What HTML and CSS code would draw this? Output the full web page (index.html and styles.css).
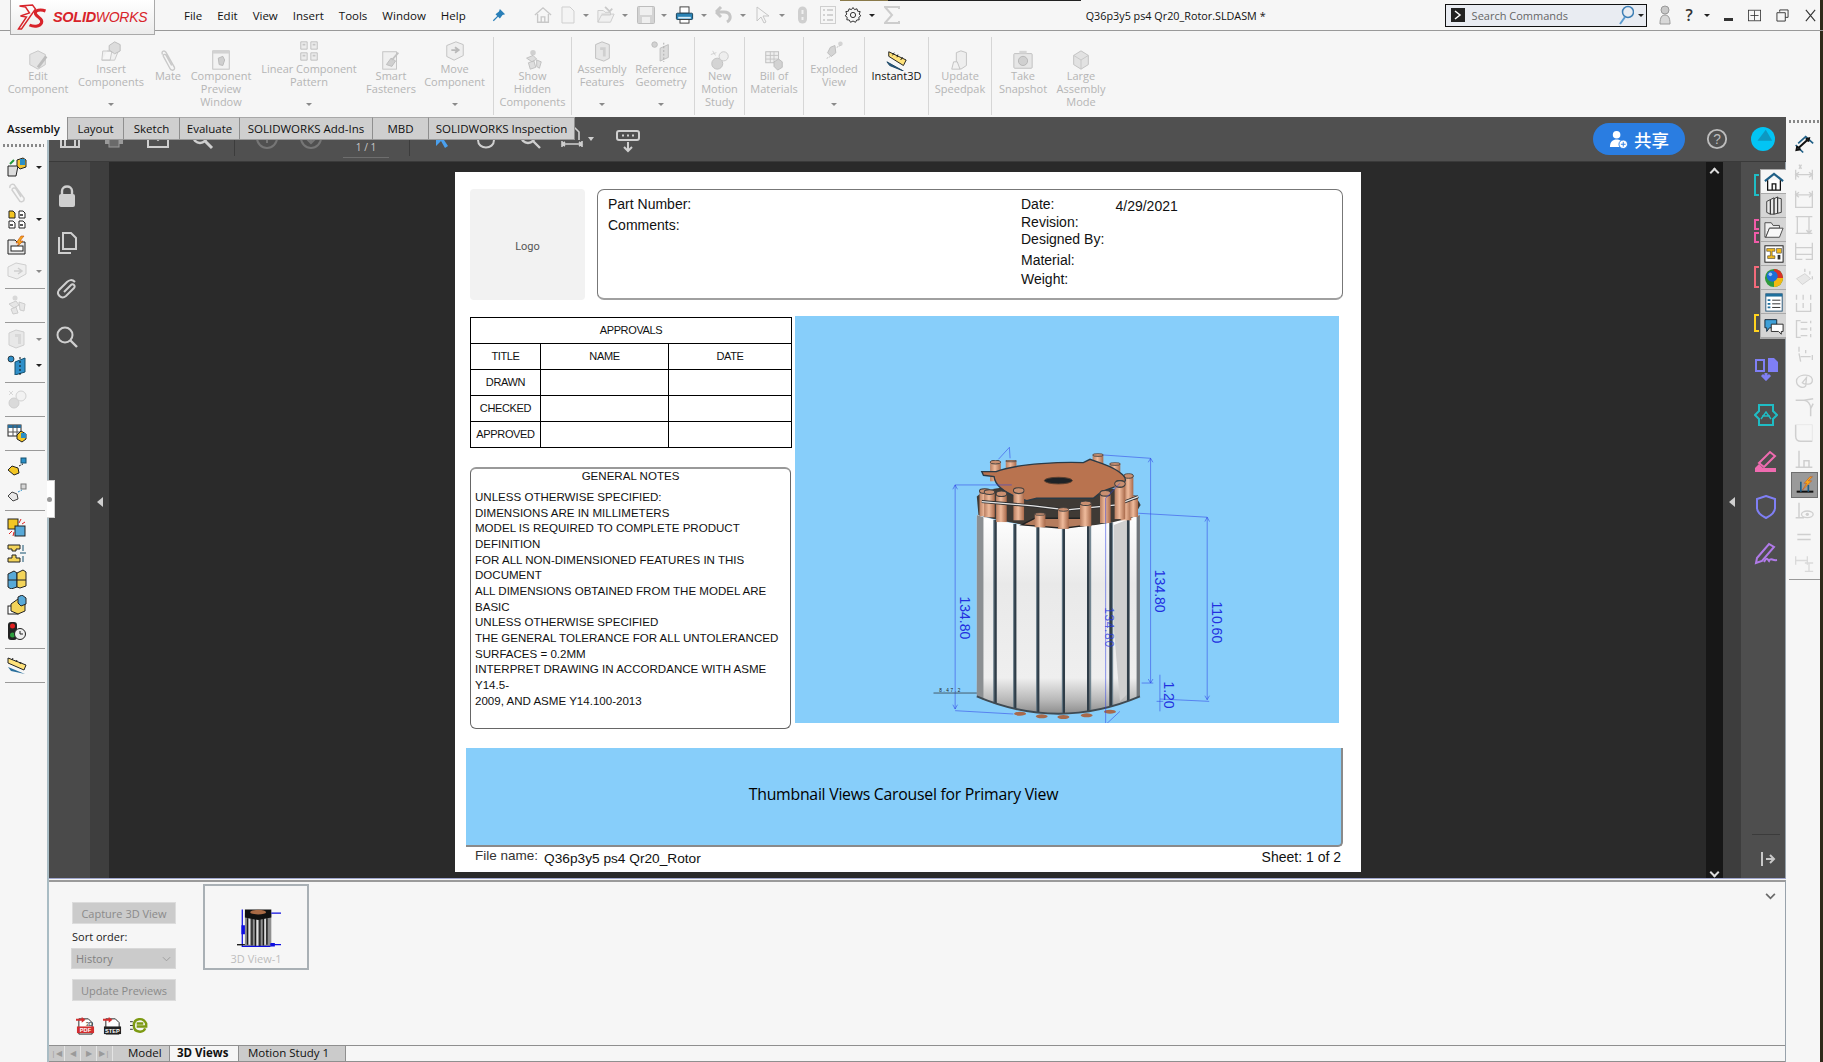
FILE: index.html
```html
<!doctype html>
<html lang="en">
  <head>
    <meta charset="UTF-8" />
    <title>Q36p3y5 ps4 Qr20_Rotor.SLDASM</title>
    <link rel="stylesheet" href="styles.css">
  </head>
  <body>
    <svg class="defs" width="0" height="0">
      <defs>
        <linearGradient id="gPanel" x1="0" y1="0" x2="0" y2="1">
          <stop offset="0" stop-color="#ffffff" />
          <stop offset="0.35" stop-color="#e9e9e9" />
          <stop offset="0.82" stop-color="#efefef" />
          <stop offset="0.93" stop-color="#b9b9b9" />
          <stop offset="1" stop-color="#8d8d8d" />
        </linearGradient>
        <linearGradient id="gStud" x1="0" y1="0" x2="1" y2="0">
          <stop offset="0" stop-color="#b87e60" />
          <stop offset="0.45" stop-color="#efbb9c" />
          <stop offset="1" stop-color="#a8694a" />
        </linearGradient>
        <symbol id="stud" viewBox="0 0 36 80" preserveAspectRatio="none">
          <rect x="2" y="8" width="32" height="72" fill="url(#gStud)" />
          <ellipse cx="18" cy="8" rx="16" ry="7" fill="#c98f70" stroke="#3f3f3f" stroke-width="3" />
        </symbol>
      </defs>
    </svg>

    <header class="titlebar">
      <div class="logo">
        <svg class="logo-mark" viewBox="0 0 30 28"><path d="M2 26 10 14 4 13 13 10 9 4 3 3 16 2 19 6 14 13 5 26Z" fill="none" stroke="#d8232a" stroke-width="1.4" /><path d="M29 8C24 6 18 7 19 11 21 15 27 15 25 20 23 24 17 24 13 22" fill="none" stroke="#d8232a" stroke-width="3" /></svg>
        <span class="logo-solid">SOLID</span><span class="logo-works">WORKS</span>
      </div>
      <nav class="menu">
        <span>File</span><span>Edit</span><span>View</span><span>Insert</span><span>Tools</span><span>Window</span><span>Help</span>
      </nav>
      <svg class="pin" viewBox="0 0 16 16"><path d="M9 1 15 7 12 8 9 12 7 10 2 15 1 14 6 9 4 7 8 4Z" fill="#2a7fb8" /></svg>
      <div class="quick">
        <svg class="q-home" viewBox="0 0 20 20"><path d="M1 10 10 2 19 10M4 9V18H16V9M8 18V12H12V18" fill="none" stroke="#c8c8c8" stroke-width="1.5" /></svg>
        <svg class="q-doc" viewBox="0 0 14 18"><path d="M1 1H9L13 5V17H1Z" fill="#f4f4f4" stroke="#cfcfcf" /></svg>
        <i class="caret"></i>
        <svg class="q-open" viewBox="0 0 20 20"><path d="M1 5H7L9 7H15V10H5L1 18ZM1 18H15L19 9H5" fill="#f0f0f0" stroke="#cacaca" /><path d="M9 1 14 6 17 3" fill="none" stroke="#cacaca" stroke-width="2" /></svg>
        <i class="caret"></i>
        <svg class="q-save" viewBox="0 0 18 18"><rect x="0.5" y="0.5" width="17" height="17" rx="1" fill="#d4d4d4" stroke="#bdbdbd" /><rect x="3" y="1" width="12" height="8" fill="#efefef" /><rect x="5" y="11" width="8" height="6" fill="#efefef" /></svg>
        <i class="caret"></i>
        <svg class="q-print" viewBox="0 0 20 20"><rect x="5" y="1" width="10" height="7" fill="#fff" stroke="#333" /><rect x="1" y="8" width="18" height="7" rx="1" fill="#2a83b5" stroke="#12394f" /><rect x="3" y="12" width="14" height="2" fill="#d9eefa" /><rect x="5" y="15" width="10" height="4" fill="#fff" stroke="#333" /></svg>
        <i class="caret"></i>
        <svg class="q-undo" viewBox="0 0 18 18"><path d="M1 6H9C16 6 17 13 12 16M1 6 6 1M1 6 6 11" fill="none" stroke="#c6c6c6" stroke-width="3" /></svg>
        <i class="caret"></i>
        <svg class="q-cursor" viewBox="0 0 14 18"><path d="M1 1V15L5 11 8 17 10 16 7 10H13Z" fill="#f6f6f6" stroke="#c6c6c6" /></svg>
        <i class="caret"></i>
        <svg class="q-mouse" viewBox="0 0 10 18"><rect x="0.5" y="0.5" width="9" height="17" rx="4.5" fill="#cfcfcf" /><path d="M5 4V8M5 11V14" stroke="#f0f0f0" stroke-width="2" /></svg>
        <svg class="q-list" viewBox="0 0 16 18"><rect x="0.5" y="0.5" width="15" height="17" fill="none" stroke="#cfcfcf" /><path d="M3 4H5M7 4H13M3 9H5M7 9H13M3 14H5M7 14H13" stroke="#c6c6c6" stroke-width="1.5" /></svg>
        <svg class="q-gear" viewBox="0 0 18 18"><circle cx="9" cy="9" r="2.6" fill="none" stroke="#333" /><path d="M9 1.5 10.5 3.6 13 2.8 13.6 5.2 16.2 5.6 15.2 8 16.8 9.8 14.8 11.3 15.2 13.8 12.7 14 11.5 16.3 9 15 6.5 16.3 5.3 14 2.8 13.8 3.2 11.3 1.2 9.8 2.8 8 1.8 5.6 4.4 5.2 5 2.8 7.5 3.6Z" fill="none" stroke="#333" /></svg>
        <i class="caret dark"></i>
        <svg class="q-sigma" viewBox="0 0 16 18"><path d="M15 3V1H1L8 9 1 17H15V15" fill="none" stroke="#cdcdcd" stroke-width="2" /></svg>
      </div>
      <div class="doc-title">Q36p3y5 ps4 Qr20_Rotor.SLDASM *</div>
      <div class="search">
        <svg class="search-cmd" viewBox="0 0 14 14"><rect width="14" height="14" fill="#222" /><path d="M4 3 9 7 4 11" fill="none" stroke="#fff" stroke-width="1.5" /></svg>
        <span>Search Commands</span>
        <svg class="search-glass" viewBox="0 0 16 20"><circle cx="10" cy="7" r="5.5" fill="none" stroke="#3f7fb5" stroke-width="1.5" /><path d="M7 12 2 19" stroke="#5b9bd0" stroke-width="2" /></svg>
        <i class="caret dark"></i>
      </div>
      <svg class="user" viewBox="0 0 14 20"><circle cx="7" cy="5" r="4" fill="#c9c9c9" stroke="#999" /><path d="M2 19C2 12 4 10 7 10S12 12 12 19Z" fill="#d8d8d8" stroke="#999" /></svg>
      <span class="qmark">?</span>
      <i class="caret dark"></i>
      <div class="winbtns">
        <span class="min"></span>
        <svg viewBox="0 0 16 16"><rect x="0.5" y="1.5" width="15" height="13" fill="none" stroke="#333" /><path d="M8 2V14M3 8H13" stroke="#333" /></svg>
        <svg viewBox="0 0 14 14"><path d="M4 3V1H13V9H10M1 4H10V13H1Z" fill="none" stroke="#333" /></svg>
        <svg viewBox="0 0 12 14"><path d="M1 1 11 13M11 1 1 13" stroke="#333" stroke-width="1.2" /></svg>
      </div>
      <div class="top-strip"></div>
    </header>

    <section class="ribbon">
      <div class="rb"><svg viewBox="0 0 24 24"><path d="M3 6 12 2 20 6V17L12 22 3 17Z" fill="#e4e4e4" stroke="#c6c6c6" /><path d="M12 20 21 8" stroke="#bdbdbd" stroke-width="3" /></svg><span>Edit<br>Component</span></div>
      <div class="rb arrow"><svg viewBox="0 0 24 24"><path d="M3 12H13L11 22H2ZM2 22H16L20 12H8" fill="#f0f0f0" stroke="#c6c6c6" /><path d="M10 6 16 2 22 5V12L16 15 10 11Z" fill="#dcdcdc" stroke="#bbb" /></svg><span>Insert<br>Components</span><i class="caret"></i></div>
      <div class="rb"><svg viewBox="0 0 24 24"><path d="M6 6 C4 2 9 1 10 4L19 20C20 24 15 24 14 21L7 8C6 6 9 5 10 7L16 18" fill="none" stroke="#c9c9c9" stroke-width="1.5" /></svg><span>Mate</span></div>
      <div class="rb"><svg viewBox="0 0 24 24"><rect x="3" y="2" width="18" height="20" fill="#f2f2f2" stroke="#bfbfbf" /><rect x="3" y="2" width="18" height="3" fill="#d2d2d2" /><path d="M9 10 14 8 16 12 14 18 10 17Z" fill="#cfcfcf" stroke="#b8b8b8" /></svg><span>Component<br>Preview<br>Window</span></div>
      <div class="rb arrow"><svg viewBox="0 0 24 24"><path d="M3 2H10V10H3ZM14 2H21V10H14ZM3 14H10V22H3ZM14 14H21V22H14Z" fill="#ececec" stroke="#bdbdbd" /><path d="M5 5H8M16 5H19M5 17H8M16 17H19" stroke="#c6c6c6" stroke-width="2" /></svg><span>Linear Component<br>Pattern</span><i class="caret"></i></div>
      <div class="rb"><svg viewBox="0 0 24 24"><rect x="3" y="3" width="15" height="19" fill="#f0f0f0" stroke="#c2c2c2" /><path d="M7 17 12 10 17 13 13 19Z" fill="#d0d0d0" stroke="#bbb" /><path d="M13 12 20 4" stroke="#c2c2c2" stroke-width="2" /></svg><span>Smart<br>Fasteners</span></div>
      <div class="rb arrow group-end"><svg viewBox="0 0 24 24"><path d="M3 6 13 2 21 5V17L11 22 3 18Z" fill="#eee" stroke="#bfbfbf" /><path d="M8 11H15M12 8 16 11 12 14" fill="none" stroke="#b9b9b9" stroke-width="2" /></svg><span>Move<br>Component</span><i class="caret"></i></div>
      <div class="rb group-end"><svg viewBox="0 0 24 24"><circle cx="12" cy="4" r="3" fill="#d0d0d0" /><path d="M5 10 12 7 16 11 11 14ZM7 15 13 13 15 20 9 22ZM16 12 21 14 19 21 16 19Z" fill="#dedede" stroke="#bebebe" /></svg><span>Show<br>Hidden<br>Components</span></div>
      <div class="rb arrow"><svg viewBox="0 0 24 24"><path d="M5 5 12 2 20 5V20L14 23 5 20Z" fill="#e6e6e6" stroke="#bdbdbd" /><path d="M10 8H16V18H13V11H10Z" fill="#cfcfcf" /></svg><span>Assembly<br>Features</span><i class="caret"></i></div>
      <div class="rb arrow group-end rb-ref"><svg viewBox="0 0 24 24"><circle cx="5" cy="5" r="3" fill="#d2d2d2" stroke="#bbb" /><path d="M11 9 20 5V19L11 23Z" fill="#dcdcdc" stroke="#bdbdbd" /><path d="M15 3V24" stroke="#aaa" stroke-dasharray="2 2" /></svg><span>Reference<br>Geometry</span><i class="caret"></i></div>
      <div class="rb group-end"><svg viewBox="0 0 24 24"><circle cx="9" cy="16" r="6" fill="#d4d4d4" stroke="#c0c0c0" /><circle cx="16" cy="8" r="5" fill="#eee" stroke="#c8c8c8" /><path d="M4 2 7 7M2 6 8 4" stroke="#cfcfcf" /></svg><span>New<br>Motion<br>Study</span></div>
      <div class="rb group-end"><svg viewBox="0 0 24 24"><rect x="3" y="3" width="14" height="12" fill="#eee" stroke="#bdbdbd" /><path d="M3 7H17M3 11H17M8 3V15M12 3V15" stroke="#c4c4c4" /><path d="M12 14 17 11 21 14 21 20 16 23 12 19Z" fill="#d2d2d2" stroke="#bbb" /></svg><span>Bill of<br>Materials</span></div>
      <div class="rb arrow group-end"><svg viewBox="0 0 24 24"><circle cx="19" cy="4" r="2.5" fill="#d4d4d4" /><path d="M8 8 13 6 14 14 9 18 5 14Z" fill="#d4d4d4" stroke="#bbb" /><path d="M15 8 19 6M4 20 8 18" stroke="#bbb" stroke-dasharray="2 1" /></svg><span>Exploded<br>View</span><i class="caret"></i></div>
      <div class="rb on group-end"><svg viewBox="0 0 24 24"><path d="M3 3 22 12 19 18 3 8Z" fill="#ffe27a" stroke="#111" /><path d="M7 7 9 4M12 9 13 6M16 12 18 9" stroke="#111" /><path d="M1 14 19 24 4 18Z" fill="#2a5f86" stroke="#17415f" /></svg><span>Instant3D</span></div>
      <div class="rb group-end"><svg viewBox="0 0 24 24"><path d="M8 4 13 2 19 4V18L13 22 8 19Z" fill="#eee" stroke="#c0c0c0" /><path d="M5 14 3 22H12L9 14Z" fill="#f2f2f2" stroke="#c0c0c0" /></svg><span>Update<br>Speedpak</span></div>
      <div class="rb"><svg viewBox="0 0 24 24"><rect x="2" y="5" width="20" height="16" rx="1" fill="#e6e6e6" stroke="#bdbdbd" /><circle cx="12" cy="13" r="5" fill="#d0d0d0" stroke="#b5b5b5" /><rect x="8" y="2" width="8" height="3" fill="#d5d5d5" /></svg><span>Take<br>Snapshot</span></div>
      <div class="rb"><svg viewBox="0 0 24 24"><path d="M4 7 12 2 20 7V17L12 22 4 17Z" fill="#e2e2e2" stroke="#c0c0c0" /><path d="M4 7 12 12 20 7M12 12V22" fill="none" stroke="#c6c6c6" /></svg><span>Large<br>Assembly<br>Mode</span></div>
    </section>

    <div class="tabs">
      <span class="tab current">Assembly</span>
      <span class="tab t-layout">Layout</span>
      <span class="tab t-sketch">Sketch</span>
      <span class="tab t-eval">Evaluate</span>
      <span class="tab t-addins">SOLIDWORKS Add-Ins</span>
      <span class="tab t-mbd">MBD</span>
      <span class="tab t-insp">SOLIDWORKS Inspection</span>
    </div>

    <div class="workspace">
      <aside class="leftbar">
        <div class="grip"></div>
        <div class="lb-row"><svg viewBox="0 0 20 20"><path d="M1 9H11L9 19H1Z" fill="#ddd" stroke="#222" /><path d="M3 7 7 3" stroke="#1f9a3c" stroke-width="2" /><path d="M10 3 16 1 19 3V10L13 12 10 9Z" fill="#f2c230" stroke="#222" /><rect x="13" y="2" width="5" height="6" fill="#2a8fc7" /></svg><i class="caret dark"></i></div>
        <div class="lb-row"><svg viewBox="0 0 20 20"><path d="M3 5C2 1 7 0 8 3L17 15C18 19 13 20 12 17L5 7C5 5 8 4 9 6L14 14" fill="none" stroke="#d0d0d0" stroke-width="1.5" /></svg></div>
        <div class="lb-row"><svg viewBox="0 0 20 20"><path d="M2 2H6L8 4V9H2Z" fill="#f3c623" stroke="#222" /><path d="M12 2H16L18 4V9H12ZM2 12H6L8 14V19H2ZM12 12H16L18 14V19H12Z" fill="#fff" stroke="#222" /><path d="M13 6H16M3 16H6M13 16H16" stroke="#222" stroke-width="1.5" /></svg><i class="caret dark"></i></div>
        <div class="lb-row"><svg viewBox="0 0 20 20"><path d="M1 5H8L10 7H18V19H1Z" fill="#e8e8e8" stroke="#222" /><path d="M14 1 9 8 12 8 9 13 16 6 13 6 17 1Z" fill="#f7a81b" stroke="#c24a12" stroke-width="0.6" /><rect x="4" y="11" width="12" height="5" fill="#fff" stroke="#222" /></svg></div>
        <div class="lb-row"><svg viewBox="0 0 20 20"><path d="M1 6 9 2 19 4V13L10 18 1 15Z" fill="#efefef" stroke="#cfcfcf" /><path d="M7 10H14M11 7 15 10 11 13" fill="none" stroke="#cfcfcf" stroke-width="1.5" /></svg><i class="caret"></i></div>
        <hr class="lb-sep">
        <div class="lb-row"><svg viewBox="0 0 20 20"><circle cx="8" cy="3" r="2.5" fill="#d8d8d8" /><path d="M2 9 9 6 12 10 7 13ZM4 14 9 12 11 18 6 19ZM12 7 18 9 17 16 13 15Z" fill="#e6e6e6" stroke="#cdcdcd" /></svg></div>
        <hr class="lb-sep">
        <div class="lb-row"><svg viewBox="0 0 20 20"><path d="M2 4 9 1 17 3V16L9 19 2 16Z" fill="#e8e8e8" stroke="#cfcfcf" /><path d="M8 5H14V15H11V8H8Z" fill="#d8d8d8" /></svg><i class="caret"></i></div>
        <div class="lb-row"><svg viewBox="0 0 20 20"><circle cx="4" cy="4" r="3" fill="#2f8fc9" stroke="#111" stroke-width="0.7" /><path d="M8 7 18 3V17L8 20Z" fill="#2f8fc9" stroke="#14506f" /><path d="M13 2V20" stroke="#111" stroke-dasharray="2 2" /></svg><i class="caret dark"></i></div>
        <hr class="lb-sep">
        <div class="lb-row"><svg viewBox="0 0 20 20"><circle cx="7" cy="14" r="5" fill="#dadada" stroke="#cfcfcf" /><circle cx="14" cy="7" r="5" fill="#f2f2f2" stroke="#d2d2d2" /><path d="M2 2 6 6M2 6 6 2" stroke="#d8d8d8" /></svg></div>
        <hr class="lb-sep">
        <div class="lb-row"><svg viewBox="0 0 20 20"><rect x="1" y="2" width="13" height="11" fill="#fff" stroke="#222" /><rect x="1" y="2" width="13" height="3" fill="#2a6f9c" /><path d="M1 9H14M6 2V13M10 2V13" stroke="#555" /><path d="M10 12 14 8 19 11V16L15 19 10 16Z" fill="#f3c623" stroke="#222" /><rect x="14" y="10" width="5" height="5" fill="#2a8fc7" /></svg></div>
        <hr class="lb-sep">
        <div class="lb-row"><svg viewBox="0 0 20 20"><path d="M1 13 5 9 11 11 12 16 7 18Z" fill="#f3c623" stroke="#222" /><rect x="14" y="1" width="5" height="5" fill="#2a8fc7" stroke="#14506f" /><path d="M12 9 16 7" stroke="#222" stroke-dasharray="2 1" /></svg></div>
        <div class="lb-row"><svg viewBox="0 0 20 20"><path d="M1 13 5 9 10 11 11 16 6 18Z" fill="#e8e8e8" stroke="#444" /><rect x="14" y="1" width="5" height="5" fill="#d6d6d6" stroke="#777" /><path d="M11 9 15 7" stroke="#2a8fc7" stroke-dasharray="2 1" /></svg></div>
        <hr class="lb-sep">
        <div class="lb-row"><svg viewBox="0 0 20 20"><rect x="1" y="2" width="10" height="10" fill="#f3c623" stroke="#222" /><rect x="8" y="9" width="10" height="10" fill="#58a9d8" stroke="#222" /><path d="M14 2 12 6M18 5 15 7M2 17 5 14M6 19 7 15" stroke="#e02020" /></svg></div>
        <div class="lb-row"><svg viewBox="0 0 20 20"><path d="M1 2H13V6H9V8H5V6H1ZM5 12H9V15H13V19H1V15H5Z" fill="#f3d45a" stroke="#222" /><path d="M13 10H19M16 2V8M16 13V19" stroke="#14506f" /></svg></div>
        <div class="lb-row"><svg viewBox="0 0 20 20"><path d="M1 5 7 2 10 4V18L4 20 1 18Z" fill="#58a9d8" stroke="#222" /><path d="M10 4 16 1 19 3V17L13 19 10 18Z" fill="#f3d45a" stroke="#222" /><path d="M1 11H19" stroke="#222" /></svg></div>
        <div class="lb-row"><svg viewBox="0 0 20 20"><rect x="1" y="11" width="10" height="8" fill="#fff" stroke="#222" /><path d="M4 9 11 4 18 7V16L11 19 4 16Z" fill="#f3d45a" stroke="#222" /><path d="M11 2 15 0 19 3V9L14 11 11 8Z" fill="#58a9d8" stroke="#222" /></svg></div>
        <div class="lb-row"><svg viewBox="0 0 20 20"><rect x="1" y="1" width="9" height="18" rx="3" fill="#222" /><circle cx="5.5" cy="5" r="2.5" fill="#e02020" /><circle cx="5.5" cy="14" r="2.5" fill="#2e9e3e" /><circle cx="13" cy="13" r="5.5" fill="#eee" stroke="#222" /><path d="M13 10V13H16" fill="none" stroke="#222" /></svg></div>
        <hr class="lb-sep">
        <div class="lb-row"><svg viewBox="0 0 20 20"><path d="M1 3 19 10 17 15 1 8Z" fill="#ffe27a" stroke="#222" /><path d="M5 5 6 3M9 7 10 5M13 9 14 7" stroke="#222" /><path d="M1 12 18 19 4 16Z" fill="#2a6f9c" /></svg></div>
        <hr class="lb-sep">
        <div class="flyout"><b></b></div>
      </aside>

      <main class="center">
        <section class="viewer">
          <div class="vtools">
            <svg viewBox="0 0 24 24"><path d="M3 3H21V21H3Z" fill="none" stroke="#cfcfcf" stroke-width="2" /><path d="M7 12H17V21H7Z" fill="none" stroke="#cfcfcf" stroke-width="2" /></svg>
            <svg viewBox="0 0 24 24"><path d="M6 2H18V8H6ZM3 8H21V18H3Z" fill="#9a9a9a" /><rect x="7" y="13" width="10" height="8" fill="#6a6a6a" stroke="#9a9a9a" /></svg>
            <svg viewBox="0 0 24 24"><path d="M2 5H22V21H2ZM2 5 12 14 22 5" fill="none" stroke="#cfcfcf" stroke-width="2" /></svg>
            <svg viewBox="0 0 24 24"><circle cx="10" cy="10" r="7" fill="none" stroke="#cfcfcf" stroke-width="2.4" /><path d="M15 15 22 22" stroke="#cfcfcf" stroke-width="3" /></svg>
            <i class="vsep"></i>
            <svg viewBox="0 0 24 24"><circle cx="12" cy="12" r="10" fill="none" stroke="#767676" stroke-width="2" /><path d="M12 17V7M8 11 12 7 16 11" fill="none" stroke="#767676" stroke-width="2" /></svg>
            <svg viewBox="0 0 24 24"><circle cx="12" cy="12" r="10" fill="none" stroke="#767676" stroke-width="2" /><path d="M12 7V17M8 13 12 17 16 13" fill="none" stroke="#767676" stroke-width="2" /></svg>
            <span class="pagenum">1 / 1</span>
            <i class="vsep"></i>
            <svg viewBox="0 0 24 24"><path d="M6 2V20L11 15 15 22 18 20 14 14H21Z" fill="#4aa0ee" /></svg>
            <svg viewBox="0 0 24 24"><path d="M4 4V14C4 24 20 24 20 14V4" fill="none" stroke="#cfcfcf" stroke-width="2" /></svg>
            <svg viewBox="0 0 24 24"><circle cx="10" cy="10" r="7" fill="none" stroke="#cfcfcf" stroke-width="2.4" /><path d="M15 15 22 22M6 10H14" stroke="#cfcfcf" stroke-width="2.4" /></svg>
            <svg class="v-fit" viewBox="0 0 24 24"><path d="M5 2H15L19 6V14M5 2V14M2 18H22M2 15V21M22 15V21M5 16 2 18 5 20M19 16 22 18 19 20" fill="none" stroke="#cfcfcf" stroke-width="1.6" /></svg>
            <i class="vcaret"></i>
            <svg class="v-kb" viewBox="0 0 24 24"><rect x="1" y="2" width="22" height="9" rx="2" fill="none" stroke="#cfcfcf" stroke-width="2" /><path d="M6 6.5H8M11 6.5H13M16 6.5H18" stroke="#cfcfcf" stroke-width="2" /><path d="M12 13V22M8 18 12 22 16 18" fill="none" stroke="#cfcfcf" stroke-width="2" /></svg>
          </div>
          <div class="vshare">
            <button class="share"><svg viewBox="0 0 20 20"><circle cx="8" cy="5" r="4" fill="#fff" /><path d="M1 18C1 12 4 10 8 10S15 12 15 18Z" fill="#fff" /><circle cx="15" cy="15" r="4.5" fill="#fff" stroke="#2a7de1" /><path d="M15 12.5V17.5M12.5 15H17.5" stroke="#2a7de1" /></svg>共享</button>
            <svg class="vhelp" viewBox="0 0 24 24"><circle cx="12" cy="12" r="10" fill="none" stroke="#bdbdbd" stroke-width="2" /><text x="12" y="17" class="vhelp-q">?</text></svg>
            <svg class="vavatar" viewBox="0 0 26 26"><circle cx="13" cy="13" r="13" fill="#02c4f4" /><path d="M16 3 23 15H7Z" fill="#0d98c2" /></svg>
          </div>

          <div class="vbody">
            <div class="vpanel">
              <svg viewBox="0 0 24 24"><rect x="4" y="10" width="16" height="13" rx="2" fill="#cfcfcf" /><path d="M7 10V7C7 1 17 1 17 7V10" fill="none" stroke="#cfcfcf" stroke-width="2.4" /></svg>
              <svg viewBox="0 0 24 24"><path d="M8 2H16L21 7V18H8ZM4 6V22H16" fill="none" stroke="#cfcfcf" stroke-width="2" /></svg>
              <svg viewBox="0 0 24 24"><path d="M20 4C17 1 14 2 12 4L4 12C1 16 6 22 11 18L19 10C21 8 18 5 16 7L9 14" fill="none" stroke="#cfcfcf" stroke-width="2" /></svg>
              <svg viewBox="0 0 24 24"><circle cx="10" cy="10" r="7.5" fill="none" stroke="#cfcfcf" stroke-width="2" /><path d="M15.5 15.5 22 22" stroke="#cfcfcf" stroke-width="2.4" /></svg>
            </div>
            <div class="vstrip"><i class="tri-left"></i></div>

            <div class="canvas">
              <article class="page">
                <div class="page-head">
                  <div class="logo-box">Logo</div>
                  <div class="info-box">
                    <div class="info-left">
                      <div class="il-part">Part Number:</div>
                      <div class="il-comm">Comments:</div>
                    </div>
                    <div class="info-right">
                      <div class="ir-date"><span>Date:</span><span class="date-val">4/29/2021</span></div>
                      <div class="ir-rev">Revision:</div>
                      <div class="ir-des">Designed By:</div>
                      <div class="ir-mat">Material:</div>
                      <div class="ir-wei">Weight:</div>
                    </div>
                  </div>
                </div>

                <div class="page-main">
                  <div class="page-left">
                    <table class="approvals">
                      <colgroup><col class="c1"><col class="c2"><col></colgroup>
                      <tr><td colspan="3">APPROVALS</td></tr>
                      <tr><td>TITLE</td><td>NAME</td><td>DATE</td></tr>
                      <tr><td>DRAWN</td><td></td><td></td></tr>
                      <tr><td>CHECKED</td><td></td><td></td></tr>
                      <tr><td>APPROVED</td><td></td><td></td></tr>
                    </table>
                    <div class="notes">
                      <div class="notes-title">GENERAL NOTES</div>
                      <p>UNLESS OTHERWISE SPECIFIED:<br>DIMENSIONS ARE IN MILLIMETERS<br>MODEL IS REQUIRED TO COMPLETE PRODUCT<br>DEFINITION<br>FOR ALL NON-DIMENSIONED FEATURES IN THIS<br>DOCUMENT<br>ALL DIMENSIONS OBTAINED FROM THE MODEL ARE<br>BASIC<br>UNLESS OTHERWISE SPECIFIED<br>THE GENERAL TOLERANCE FOR ALL UNTOLERANCED<br>SURFACES = 0.2MM<br>INTERPRET DRAWING IN ACCORDANCE WITH ASME<br>Y14.5-<br>2009, AND ASME Y14.100-2013</p>
                    </div>
                  </div>
                  <div class="primary-view">
                    <svg class="rotor" viewBox="0 0 990 880">
                      <path d="M170 255V800Q415 904 660 800V255Q415 329 170 255Z" fill="url(#gPanel)" />
                      <path d="M582 285 625 268V790L600 815 582 600Z" fill="#cfcfcf" />
                      <path d="M170 255V800L190 812V262Z" fill="#8b8f92" />
                      <path d="M650 258V803L660 800V255Z" fill="#70767b" />
                      <g fill="none" stroke="#2f3d48" stroke-width="8">
                        <path d="M226 270V821M285 282V837M354 290V849M431 292V852M505 287V845M572 277V831M625 265V814" />
                      </g>
                      <g fill="none" stroke="#5d7382" stroke-width="3">
                        <path d="M221 270V821M281 282V837M350 290V849M427 292V852M512 287V845M578 277V831" />
                      </g>
                      <path d="M170 800Q415 904 660 800" fill="none" stroke="#3f4a52" stroke-width="6" />
                      <g fill="#a8694a">
                        <ellipse cx="300" cy="852" rx="18" ry="6" /><ellipse cx="365" cy="860" rx="18" ry="6" /><ellipse cx="430" cy="862" rx="18" ry="6" /><ellipse cx="500" cy="857" rx="18" ry="6" /><ellipse cx="570" cy="846" rx="18" ry="6" />
                      </g>
                      <path d="M170 200Q200 165 415 160Q640 165 662 225L640 262Q415 325 175 255Z" fill="#3f3a35" />
                      <use href="#stud" x="600" y="190" width="36" height="82" />
                      <use href="#stud" x="626" y="196" width="30" height="66" />
                      <use href="#stud" x="610" y="130" width="32" height="80" />
                      <use href="#stud" x="208" y="90" width="36" height="65" />
                      <use href="#stud" x="255" y="90" width="36" height="30" />
                      <use href="#stud" x="516" y="70" width="36" height="50" />
                      <use href="#stud" x="567" y="97" width="36" height="50" />
                      <path d="M185 125H228C290 100 440 95 490 98L510 88 545 100C600 120 640 150 600 165L545 185 520 205H350L320 212C265 195 225 170 222 140L190 136Z" fill="#b9734f" stroke="#2a3a46" stroke-width="4" />
                      <ellipse cx="415" cy="152" rx="42" ry="10" fill="#1e2226" stroke="#5a4030" stroke-width="3" />
                      <path d="M305 285 345 265 480 265 510 285 430 295Z" fill="#b57c5d" stroke="#222" stroke-width="4" />
                      <use href="#stud" x="176" y="175" width="36" height="85" />
                      <use href="#stud" x="190" y="178" width="36" height="85" />
                      <use href="#stud" x="226" y="182" width="36" height="95" />
                      <use href="#stud" x="278" y="172" width="36" height="100" />
                      <path d="M185 215 340 228 440 240 590 225 655 200" fill="none" stroke="#2f2f2f" stroke-width="9" />
                      <path d="M185 215 340 228 440 240 590 225 655 200" fill="none" stroke="#e6e6e6" stroke-width="4" />
                      <use href="#stud" x="342" y="248" width="36" height="45" />
                      <use href="#stud" x="412" y="232" width="36" height="65" />
                      <use href="#stud" x="478" y="212" width="38" height="78" />
                      <use href="#stud" x="538" y="180" width="36" height="100" />
                      <use href="#stud" x="582" y="150" width="36" height="118" />
                      <g fill="none" stroke="#2c3fe6" stroke-width="1.6">
                        <path d="M105 165H275M105 165V838M98 178 105 165 112 178M98 825 105 838 112 825" />
                        <path d="M105 843 280 853" />
                        <path d="M550 75 692 85V760M685 97 692 85 699 97M685 748 692 760 699 748M665 760H700" />
                        <path d="M655 250 862 262V810M855 275 862 262 869 275M855 798 862 810 869 798M720 808 868 815" />
                        <path d="M720 735V845M710 815H730" />
                        <path d="M557 885V205L600 160M557 885 600 845" />
                        <path d="M235 88 268 52 270 85" />
                      </g>
                      <g class="dim-text">
                        <text transform="translate(120 500) rotate(90)">134.80</text>
                        <text transform="translate(705 420) rotate(90)">134.80</text>
                        <text transform="translate(875 515) rotate(90)">110.60</text>
                        <text transform="translate(733 755) rotate(90)">1.20</text>
                        <text class="dim-thin" transform="translate(555 532) rotate(90)">134.80</text>
                      </g>
                      <path d="M40 790H170" stroke="#222" stroke-width="2" />
                      <text class="dim-dark" x="57" y="788">8.47.2</text>
                    </svg>
                  </div>
                </div>

                <div class="carousel">Thumbnail Views Carousel for Primary View</div>

                <div class="page-foot">
                  <span class="fn-label">File name:</span>
                  <span class="fn-value">Q36p3y5 ps4 Qr20_Rotor</span>
                  <span class="sheet">Sheet: 1 of 2</span>
                </div>
              </article>
            </div>

            <div class="vscroll"><i class="chev up"></i><i class="chev"></i></div>
            <div class="vstrip2"><i class="tri-left"></i></div>
            <div class="vright">
              <svg class="teal" viewBox="0 0 24 24"><path d="M5 2H1V22H5" fill="none" stroke="#1fbcc4" stroke-width="2" /></svg>
              <svg viewBox="0 0 24 24"><path d="M5 1H1V10H5M5 14H1V23H5" fill="none" stroke="#f05ba8" stroke-width="2" /></svg>
              <svg viewBox="0 0 24 24"><path d="M5 2H1V22H5" fill="none" stroke="#f26a7a" stroke-width="2" /></svg>
              <svg viewBox="0 0 24 24"><path d="M5 4H1V20H5" fill="none" stroke="#ffd21f" stroke-width="2" /></svg>
              <svg viewBox="0 0 24 24"><path d="M1 2H11V15H1ZM14 1H20L24 5V15H14Z" fill="#7f7ff5" /><path d="M3 4H9V13H3Z" fill="#4a4a4a" /><path d="M12 16V21M8 18 12 22 16 18" stroke="#7f7ff5" stroke-width="3" fill="none" /></svg>
              <svg viewBox="0 0 24 24"><path d="M5 2H19V8L23 12 19 16V22H5V16L1 12 5 8Z" fill="none" stroke="#1fbcc4" stroke-width="2" /><path d="M7 16 12 9 17 16M8 13H16" fill="none" stroke="#1fbcc4" stroke-width="1.4" /></svg>
              <svg viewBox="0 0 24 24"><path d="M5 14 16 3 21 7 10 18Z" fill="none" stroke="#ef6bb0" stroke-width="2" /><path d="M1 19 5 15 9 19H22V23H1Z" fill="#ef6bb0" /></svg>
              <svg viewBox="0 0 24 24"><path d="M12 1 21 4V13C21 18 16 21 12 23 8 21 3 18 3 13V4Z" fill="none" stroke="#7f7ff5" stroke-width="2" /></svg>
              <svg viewBox="0 0 24 24"><path d="M3 17 15 3 20 6 8 20 2 22Z" fill="none" stroke="#b07ae8" stroke-width="2" /><path d="M10 21C13 15 14 19 15 20 17 16 18 20 23 19" fill="none" stroke="#b07ae8" stroke-width="2" /></svg>
              <hr class="vright-line">
              <svg class="collapse" viewBox="0 0 16 16"><path d="M2 1V15" stroke="#c8c8c8" stroke-width="2" /><path d="M6 8H14M10 4 14 8 10 12" fill="none" stroke="#c8c8c8" stroke-width="2" /></svg>
            </div>
          </div>
        </section>

        <section class="pane">
          <div class="pane-body">
            <div class="pane-controls">
              <div class="pbtn">Capture 3D View</div>
              <label class="sort-label">Sort order:</label>
              <div class="pselect"><span>History</span><svg viewBox="0 0 10 6"><path d="M1 1 5 5 9 1" fill="none" stroke="#9a9a9a" /></svg></div>
              <div class="pbtn update">Update Previews</div>
              <div class="pane-icons">
                <svg viewBox="0 0 20 20"><path d="M3 3H13L17 7V19H3Z" fill="#fff" stroke="#222" /><path d="M0 3H6V1L10 4 6 7V5H0Z" fill="#d32f2f" /><rect x="1" y="11" width="18" height="7" fill="#d32f2f" /><text x="10" y="17" class="pi-pdf">PDF</text><text x="14" y="10" class="pi-3d">3D</text></svg>
                <svg viewBox="0 0 20 20"><path d="M3 3H13L17 7V19H3Z" fill="#fff" stroke="#222" /><path d="M0 3H6V1L10 4 6 7V5H0Z" fill="#d32f2f" /><rect x="1" y="11" width="18" height="8" fill="#222" /><text x="10" y="17.4" class="pi-step">STEP</text></svg>
                <svg viewBox="0 0 20 20"><path d="M16 13C14 18 4 18 4 10S14 1 17 8V11H7M7 8H14" fill="none" stroke="#7d9a12" stroke-width="2.6" /><path d="M0 6H3M0 10H3M0 14H3" stroke="#333" /></svg>
              </div>
            </div>
            <figure class="thumb">
              <svg viewBox="0 0 50 50">
                <rect x="9" y="8" width="30" height="38" fill="#8f8f8f" />
                <path d="M12 14V44M17 14V45M21 14V46M26 14V46M30 14V45M34 14V44" stroke="#1c1c1c" stroke-width="1.6" />
                <path d="M14 14V44M23 14V46M32 14V44" stroke="#e6e6e6" stroke-width="1.6" />
                <path d="M9 4H39V13L24 16 9 13Z" fill="#111" /><ellipse cx="24" cy="7" rx="9" ry="2.6" fill="#a96a45" />
                <path d="M6 4V46H38M39 8H52V44H38" fill="none" stroke="#0d0de0" stroke-width="1.4" />
                <path d="M5 22H9V32H5ZM50 24H54V34H50ZM38 42H43V46H38Z" fill="#0d0de0" />
                <path d="M0 44H9" stroke="#111" stroke-width="1.5" />
              </svg>
              <figcaption>3D View-1</figcaption>
            </figure>
            <svg class="pane-chev" viewBox="0 0 12 8"><path d="M1 1 6 6 11 1" fill="none" stroke="#6a6a6a" stroke-width="2" /></svg>
          </div>
          <div class="sheet-tabs">
            <div class="tnav"><i>|◀</i><i>◀</i><i>▶</i><i>▶|</i></div>
            <span class="stab">Model</span>
            <span class="stab active">3D Views</span>
            <span class="stab last">Motion Study 1</span>
          </div>
        </section>
      </main>

      <aside class="rightbar">
        <div class="grip"></div>
        <svg class="rb-first" viewBox="0 0 24 24"><path d="M5 10 14 2 23 10" fill="none" stroke="#1f5f86" stroke-width="2" /><path d="M2 12 11 21" stroke="#1f5f86" stroke-width="2" /><path d="M5 16 16 6M14 5 18 4 17 8M4 13 3 18 8 17" fill="none" stroke="#111" stroke-width="2.4" /></svg>
        <svg viewBox="0 0 24 24"><path d="M2 8V20M22 8V20M2 14H22M6 11 2 14 6 17M18 11 22 14 18 17M6 2 9 7M9 2 6 7" fill="none" stroke="#cfcfcf" stroke-width="1.6" /></svg>
        <svg viewBox="0 0 24 24"><path d="M2 2V22H22V2M2 7H22M6 4 2 7 6 10M18 4 22 7 18 10" fill="none" stroke="#cfcfcf" stroke-width="1.6" /></svg>
        <svg viewBox="0 0 24 24"><path d="M2 2H22M2 22H22M4 2V22M18 2V22M15 18 18 22 21 18" fill="none" stroke="#cfcfcf" stroke-width="1.6" /></svg>
        <svg viewBox="0 0 24 24"><path d="M2 2V22H10M22 2V22H14M2 8H22M2 16H22" fill="none" stroke="#cfcfcf" stroke-width="1.6" /></svg>
        <svg viewBox="0 0 24 24"><path d="M3 14 13 8 20 14 10 21Z" fill="#e8e8e8" stroke="#cfcfcf" /><path d="M13 6V2M19 9V5M22 15V11" stroke="#cfcfcf" stroke-width="1.6" /></svg>
        <svg viewBox="0 0 24 24"><path d="M3 2V8M11 2V8M20 2V8M3 12V22H20V12M11 12V18" fill="none" stroke="#cfcfcf" stroke-width="1.6" /></svg>
        <svg viewBox="0 0 24 24"><path d="M8 2H3V22H8M20 2V5M20 10V14M20 18V22M8 4H16M8 12H16M8 20H16" fill="none" stroke="#cfcfcf" stroke-width="1.6" /></svg>
        <svg viewBox="0 0 24 24"><path d="M6 2V8M14 6V10M22 12V18M6 10 8 20M8 14 20 14" fill="none" stroke="#cfcfcf" stroke-width="1.6" /></svg>
        <svg viewBox="0 0 24 24"><path d="M3 12C3 4 20 2 22 10 23 18 12 16 10 14L15 8 14 18C10 22 3 18 3 12Z" fill="none" stroke="#cfcfcf" stroke-width="1.6" /></svg>
        <svg viewBox="0 0 24 24"><path d="M2 4H12C16 4 20 8 20 14V23M12 4 23 2M20 14 23 8" fill="none" stroke="#cfcfcf" stroke-width="1.8" /></svg>
        <svg viewBox="0 0 24 24"><path d="M2 2V16C2 20 5 22 8 22H22" fill="none" stroke="#cfcfcf" stroke-width="1.8" /><path d="M2 2H22V22" fill="none" stroke="#e6e6e6" /></svg>
        <svg viewBox="0 0 24 24"><path d="M6 2V22M2 22H22M12 22V14H18V22" fill="none" stroke="#cfcfcf" stroke-width="1.8" /></svg>
        <div class="rb-active"><svg viewBox="0 0 24 24"><path d="M2 20H22" stroke="#111" stroke-width="2.4" /><path d="M7 8V20M16 12V20" stroke="#1f5f86" stroke-width="2" /><path d="M18 2 11 10 14 10 9 18 20 7 16 7 21 2Z" fill="#f7a81b" stroke="#c24a12" stroke-width="0.6" /></svg></div>
        <svg viewBox="0 0 24 24"><path d="M6 2V20M2 20H12" fill="none" stroke="#cfcfcf" stroke-width="1.8" /><ellipse cx="16" cy="16" rx="7" ry="4" fill="none" stroke="#cfcfcf" stroke-width="1.6" /><circle cx="16" cy="16" r="2" fill="#cfcfcf" /></svg>
        <svg viewBox="0 0 24 24"><path d="M4 9H20M4 15H20" stroke="#cfcfcf" stroke-width="2" /></svg>
        <svg viewBox="0 0 24 24"><path d="M2 4V14M16 4V14M2 9H16M13 12H23M13 22H23M18 12V22" fill="none" stroke="#dadada" stroke-width="1.6" /></svg>
        <hr class="rb-sep">
        <div class="task-tabs">
          <span class="tt first"><svg viewBox="0 0 22 22"><path d="M1 10 11 2 21 10" fill="none" stroke="#1f5f86" stroke-width="2.4" /><path d="M4 9V20H18V9M9 20V13H13V20" fill="#fff" stroke="#111" stroke-width="1.4" /></svg></span>
          <span class="tt"><svg viewBox="0 0 22 22"><path d="M3 6 7 4V20L3 18ZM7 4 11 2V20L7 20ZM11 3 15 1V19L11 20ZM15 2 19 3V18L15 19Z" fill="#e8e8e8" stroke="#333" /></svg></span>
          <span class="tt"><svg viewBox="0 0 22 22"><path d="M1 3H8L10 6H17V9H6L2 19H1Z" fill="#f0f0f0" stroke="#444" /><path d="M6 9H21L17 19H2Z" fill="#f8f8f8" stroke="#444" /></svg></span>
          <span class="tt"><svg viewBox="0 0 22 22"><rect x="1" y="2" width="20" height="18" fill="#fff" stroke="#111" /><path d="M3 5H12V8H9V13H12V16H4V13H7V8H3Z" fill="#f0b81c" stroke="#333" stroke-width="0.6" /><rect x="14" y="5" width="5" height="5" fill="#f0b81c" stroke="#333" stroke-width="0.6" /><rect x="15" y="12" width="3" height="5" fill="#333" /></svg></span>
          <span class="tt"><svg viewBox="0 0 22 22"><circle cx="11" cy="11" r="10" fill="#2f9a3c" /><path d="M11 11V1A10 10 0 0 1 21 11Z" fill="#d93025" /><path d="M11 11H21A10 10 0 0 1 11 21Z" fill="#f2b90f" /><circle cx="9" cy="9" r="6" fill="#1d6fd6" /><circle cx="7" cy="7" r="2" fill="#9fc8f5" /></svg></span>
          <span class="tt"><svg viewBox="0 0 22 22"><rect x="2" y="2" width="18" height="19" fill="#fff" stroke="#1f4f72" /><rect x="2" y="2" width="18" height="3" fill="#1f6f9c" /><path d="M4 8H7V10H4ZM4 12H7V14H4ZM4 16H7V18H4Z" fill="#1f6f9c" /><path d="M9 9H18M9 13H18M9 17H18" stroke="#222" /></svg></span>
          <span class="tt"><svg viewBox="0 0 22 22"><path d="M1 4H14V13H6L3 17V13H1Z" fill="#3fa0d8" stroke="#123" /><path d="M8 9H21V17H19V20L16 17H8Z" fill="#fff" stroke="#222" /></svg></span>
        </div>
      </aside>
      <div class="edge"></div>
    </div>
  </body>
</html>
```

FILE: styles.css
```css
* {
  box-sizing: border-box;
}
html,
body {
  margin: 0;
  padding: 0;
}
body {
  position: relative;
  width: 1823px;
  height: 1062px;
  overflow: hidden;
  display: flex;
  flex-direction: column;
  background-color: #f6f6f6;
  font-family: "Open Sans", sans-serif;
  font-size: 11px;
  color: #111;
}
svg {
  display: block;
  flex: none;
}
.defs {
  position: absolute;
}

/* carets used all over */
.caret {
  display: block;
  flex: none;
  width: 0;
  height: 0;
  border-left: 3px solid transparent;
  border-right: 3px solid transparent;
  border-top: 3px solid #8a8a8a;
}
.caret.dark {
  border-top-color: #222;
}

/* title bar */
.titlebar {
  position: relative;
  height: 31px;
  flex: none;
  display: flex;
  align-items: center;
  border-bottom: 1px solid #999;
}
.top-strip {
  position: absolute;
  left: 840px;
  top: 0;
  width: 241px;
  height: 1px;
  background: linear-gradient(90deg, #8a7a4a 20%, #222 20%);
}
.logo {
  position: relative;
  z-index: 3;
  align-self: flex-start;
  flex: none;
  width: 145px;
  height: 35px;
  margin-left: 10px;
  padding-left: 5px;
  display: flex;
  align-items: center;
  background: linear-gradient(180deg, #fff, #ececec);
  border: 1px solid #aaa;
  border-top: 0;
  color: #d8232a;
  font-family: "Liberation Sans", sans-serif;
  font-size: 14.5px;
  font-style: italic;
}
.logo-mark {
  width: 31px;
  height: 28px;
  margin-right: 6px;
}
.logo-solid {
  font-weight: bold;
  letter-spacing: -0.3px;
}
.logo-works {
  font-size: 14px;
  letter-spacing: -0.3px;
}
.menu {
  display: flex;
  gap: 15px;
  margin-left: 29px;
  font-size: 11.5px;
}
.pin {
  width: 14px;
  height: 14px;
  margin-left: 26px;
}
.quick {
  display: flex;
  align-items: center;
  margin-left: 27px;
}
.quick svg {
  height: 18px;
}
.q-home { width: 20px; }
.q-doc { width: 14px; margin: 0 8px; }
.q-open { width: 20px; margin: 0 6px 0 7px; }
.q-save { width: 18px; margin: 0 6px 0 9px; }
.q-print { width: 19px; margin: 0 7px 0 8px; }
.q-undo { width: 18px; margin: 0 7px 0 8px; }
.q-cursor { width: 14px; margin: 0 9px 0 10px; }
.q-mouse { width: 11px; margin: 0 12px 0 12px; }
.q-list { width: 16px; margin-right: 8px; }
.q-gear { width: 18px; margin-right: 7px; }
.q-sigma { width: 16px; margin-left: 9px; }
.doc-title {
  margin-left: 186px;
  font-size: 10.8px;
  white-space: nowrap;
}
.search {
  display: flex;
  align-items: center;
  width: 202px;
  height: 23px;
  margin-left: 179px;
  padding: 0 2px 0 5px;
  background-color: #e9ecf2;
  border: 1px solid #111;
  color: #666;
}
.search-cmd {
  width: 14px;
  height: 14px;
  margin-right: 7px;
}
.search-glass {
  width: 16px;
  height: 20px;
  margin-left: auto;
  margin-right: 4px;
}
.user {
  width: 14px;
  height: 20px;
  margin-left: 11px;
}
.qmark {
  margin: 0 11px 0 14px;
  font-size: 16px;
  font-weight: 600;
  color: #333;
}
.winbtns {
  display: flex;
  align-items: center;
  gap: 15px;
  margin-left: 14px;
}
.winbtns svg {
  width: 13px;
  height: 13px;
}
.min {
  width: 9px;
  height: 3px;
  margin-top: 9px;
  background-color: #333;
}

/* ribbon */
.ribbon {
  height: 86px;
  flex: none;
  display: grid;
  grid-template-columns: 76px 70px 44px 62px 114px 50px 78px 78px 60px 63px 50px 59px 61px 64px 63px 62px 54px;
  padding-top: 6px;
  padding-bottom: 2px;
  background-color: #f6f6f6;
}
.rb {
  display: flex;
  flex-direction: column;
  align-items: center;
  padding-top: 12px;
  text-align: center;
  line-height: 13px;
  color: #b5b5b5;
  white-space: nowrap;
}
.rb svg {
  width: 22px;
  height: 22px;
  margin-bottom: -2px;
}
.rb.arrow {
  padding-top: 3px;
}
.rb.arrow svg {
  margin-bottom: 0;
}
.rb-ref {
  padding-right: 4px;
}
.rb .caret {
  margin-top: auto;
  margin-bottom: 9px;
}
.group-end {
  border-right: 1px solid #d6d6d6;
}
.rb.on {
  color: #111;
}

/* tabs over the viewer toolbar */
.tabs {
  position: absolute;
  left: 0;
  top: 117px;
  z-index: 4;
  display: flex;
  height: 23px;
  font-size: 11.5px;
}
.tab {
  display: flex;
  align-items: center;
  justify-content: center;
  background-color: #cfcfcf;
  border-right: 1px solid #8f8f8f;
  border-bottom: 1px solid #9a9a9a;
  border-top: 1px solid #a8a8a8;
}
.tab.current {
  width: 68px;
  background-color: #f6f6f6;
  border-top: 0;
  border-bottom: 0;
  border-right: 1px solid #8f8f8f;
  font-weight: 600;
}
.t-layout { width: 56px; }
.t-sketch { width: 56px; }
.t-eval { width: 60px; }
.t-addins { width: 133px; }
.t-mbd { width: 56px; }
.t-insp { width: 146px; }

/* main area */
.workspace {
  flex: 1;
  min-height: 0;
  display: flex;
}
.leftbar {
  position: relative;
  width: 49px;
  flex: none;
  padding-top: 27px;
  border-right: 2px solid #a9bcc4;
}
.grip {
  height: 3px;
  margin: 0 3px 7px;
  background: repeating-linear-gradient(90deg, #888 0 2px, transparent 2px 4px);
}
.lb-row {
  display: flex;
  align-items: center;
  gap: 9px;
  height: 26px;
  padding-left: 7px;
}
.lb-row svg {
  width: 20px;
  height: 20px;
}
.lb-sep {
  height: 1px;
  margin: 3.5px 2px 3.5px 5px;
  border: 0;
  background-color: #9a9a9a;
}
.flyout {
  position: absolute;
  left: 47px;
  top: 363px;
  z-index: 2;
  width: 8px;
  height: 38px;
  display: flex;
  align-items: center;
  background-color: #fff;
  border: 1px solid #cfcfcf;
  border-left: 0;
}
.flyout b {
  width: 5px;
  height: 5px;
  border-radius: 50%;
  background-color: #999;
}
.center {
  width: 1737px;
  flex: none;
  display: flex;
  flex-direction: column;
}

/* pdf viewer */
.viewer {
  position: relative;
  height: 762px;
  flex: none;
  display: flex;
  flex-direction: column;
  border-bottom: 1px solid #9fa6cf;
}
.vtools {
  height: 45px;
  flex: none;
  display: flex;
  align-items: flex-start;
  gap: 20px;
  padding: 9px 0 0 9px;
  background-color: #505050;
  border-bottom: 1px solid #3a3a3a;
}
.vtools svg {
  width: 24px;
  height: 24px;
}
.vtools .v-fit {
  margin-left: -2px;
}
.vtools .v-kb {
  margin-left: 2px;
  margin-top: 3px;
}
.vsep {
  width: 1px;
  height: 25px;
  margin-top: 5px;
  background-color: #3c3c3c;
}
.pagenum {
  width: 46px;
  height: 17px;
  margin-top: 15px;
  color: #c8c8c8;
  font-size: 10px;
  text-align: center;
  line-height: 12px;
  border-bottom: 1px solid #6e6e6e;
}
.vcaret {
  width: 0;
  height: 0;
  margin: 11px 0 0 -16px;
  border-left: 3px solid transparent;
  border-right: 3px solid transparent;
  border-top: 4px solid #cfcfcf;
}
.vshare {
  position: absolute;
  right: 11px;
  top: 6px;
  display: flex;
  align-items: center;
}
.share {
  display: flex;
  align-items: center;
  justify-content: center;
  gap: 6px;
  width: 92px;
  height: 32px;
  padding: 0;
  border: 0;
  border-radius: 16px;
  background-color: #2a7de1;
  color: #fff;
  font-family: "Noto Sans CJK SC", sans-serif;
  font-size: 17.5px;
  font-weight: 500;
}
.share svg {
  width: 19px;
  height: 19px;
}
.vhelp {
  width: 22px;
  height: 22px;
  margin-left: 21px;
}
.vhelp-q {
  font-family: "Liberation Sans", sans-serif;
  font-size: 15px;
  fill: #bdbdbd;
  text-anchor: middle;
}
.vavatar {
  width: 24px;
  height: 26px;
  margin-left: 23px;
}
.vbody {
  flex: 1;
  min-height: 0;
  display: flex;
}
.vpanel {
  width: 41px;
  flex: none;
  display: flex;
  flex-direction: column;
  align-items: center;
  gap: 23px;
  padding: 22px 6px 0 0;
  background-color: #4a4a4a;
}
.vpanel svg {
  width: 24px;
  height: 24px;
}
.vstrip {
  width: 19px;
  flex: none;
  display: flex;
  align-items: center;
  justify-content: center;
  background-color: #3e3e3e;
}
.tri-left {
  width: 0;
  height: 0;
  margin-top: -37px;
  border-top: 5px solid transparent;
  border-bottom: 5px solid transparent;
  border-right: 6px solid #cfcfcf;
}
.canvas {
  flex: 1;
  min-width: 0;
  padding: 10px 0 0 346px;
  background-color: #2a2a2a;
}
.vscroll {
  position: relative;
  width: 17px;
  flex: none;
  display: flex;
  flex-direction: column;
  justify-content: space-between;
  align-items: center;
  padding: 4px 0 2px;
  background-color: #171717;
}
.chev {
  display: block;
  width: 7px;
  height: 7px;
  margin-top: -2px;
  border-right: 2px solid #ddd;
  border-bottom: 2px solid #ddd;
  transform: rotate(45deg);
}
.chev.up {
  margin-top: 3px;
  transform: rotate(225deg);
}
.vstrip2 {
  width: 18px;
  flex: none;
  display: flex;
  align-items: center;
  justify-content: center;
  background-color: #3d3d3d;
}
.vright {
  width: 45px;
  flex: none;
  display: flex;
  flex-direction: column;
  align-items: center;
  gap: 22px;
  padding: 11px 0 0 5px;
  background-color: #4e4e4e;
  border-right: 1px solid #98a2ab;
}
.vright svg {
  width: 24px;
  height: 24px;
}
.vright-line {
  width: 28px;
  height: 1px;
  margin: auto 0 -6px;
  border: 0;
  background-color: #3b3b3b;
}
.vright .collapse {
  width: 16px;
  height: 16px;
  margin: 0 0 11px 4px;
}

/* the document page */
.page {
  width: 906px;
  height: 700px;
  padding-top: 17px;
  background-color: #fff;
  font-family: "Liberation Sans", Arial, sans-serif;
  color: #111;
}
.page-head {
  display: flex;
  gap: 12px;
  height: 111px;
  padding-left: 15px;
}
.logo-box {
  width: 115px;
  display: flex;
  align-items: center;
  justify-content: center;
  padding-top: 4px;
  background-color: #f2f2f2;
  border-radius: 4px;
  font-family: "Roboto", sans-serif;
  font-size: 11px;
  color: #555;
}
.info-box {
  width: 746px;
  display: flex;
  font-size: 14px;
  border: 1px solid #777;
  border-bottom: 2px solid #a0a0a0;
  border-radius: 7px;
}
.info-left {
  width: 423px;
  padding: 6px 0 0 10px;
}
.il-comm {
  margin-top: 5px;
}
.info-right {
  padding-top: 6px;
  line-height: 17px;
}
.ir-date {
  display: flex;
}
.date-val {
  margin: 2px 0 0 61px;
}
.ir-rev {
  margin-top: -1px;
}
.ir-mat {
  margin-top: 4px;
}
.ir-wei {
  margin-top: 2px;
}
.page-main {
  display: flex;
  height: 412px;
  margin-top: 16px;
  padding-left: 15px;
}
.page-left {
  width: 325px;
  flex: none;
}
.approvals {
  width: 322px;
  height: 131px;
  margin-top: 1px;
  border-collapse: collapse;
  table-layout: fixed;
  font-size: 11px;
  letter-spacing: -0.35px;
  text-align: center;
}
.approvals td {
  padding: 0 0 2px;
  height: 26px;
  border: 1px solid #000;
}
.approvals .c1 {
  width: 70px;
}
.approvals .c2 {
  width: 128px;
}
.notes {
  width: 321px;
  height: 262px;
  margin-top: 19px;
  padding: 0 4px;
  overflow: hidden;
  font-size: 11.55px;
  border: 1px solid #666;
  border-top: 2px solid #999;
  border-radius: 6px;
}
.notes-title {
  line-height: 14px;
  text-align: center;
}
.notes p {
  margin: 7px 0 0;
  line-height: 15.65px;
}
.primary-view {
  width: 544px;
  height: 407px;
  display: flex;
  align-items: flex-end;
  padding-left: 125px;
  overflow: hidden;
  background-color: #87cefa;
}
.rotor {
  width: 330px;
  height: 293px;
}
.dim-text text {
  font-family: "Liberation Sans", sans-serif;
  font-size: 42px;
  fill: #2230e0;
}
.dim-text .dim-thin {
  font-size: 36px;
  letter-spacing: 2px;
  opacity: 0.7;
}
.dim-dark {
  font-family: "Liberation Sans", sans-serif;
  font-size: 14px;
  letter-spacing: 5px;
  fill: #222;
}
.carousel {
  width: 877px;
  height: 99px;
  margin: 20px 0 0 11px;
  padding: 0 0 5px;
  display: flex;
  align-items: center;
  justify-content: center;
  background-color: #87cefa;
  border-right: 2px solid #8a8a8a;
  border-bottom: 2px solid #8a8a8a;
  border-bottom-right-radius: 5px;
  font-family: "Open Sans", sans-serif;
  font-size: 15.8px;
  letter-spacing: -0.25px;
  color: #000;
}
.page-foot {
  display: flex;
  padding: 1px 20px 0 20px;
  font-size: 14px;
  align-items: flex-start;
}
.fn-label {
  font-size: 13.5px;
  color: #333;
}
.fn-value {
  margin: 3px 0 0 6px;
  font-size: 13.7px;
}
.sheet {
  margin: 1px 0 0 auto;
}

/* bottom pane */
.pane {
  flex: 1;
  min-height: 0;
  display: flex;
  flex-direction: column;
  margin-top: 1px;
  border-top: 2px solid #9a9a9a;
  border-right: 1px solid #98a2ab;
}
.pane-body {
  flex: 1;
  min-height: 0;
  display: flex;
  border-bottom: 1px solid #8f8f8f;
}
.pane-controls {
  width: 104px;
  flex: none;
  margin-left: 23px;
  padding-top: 20px;
}
.pbtn {
  display: flex;
  align-items: center;
  justify-content: center;
  height: 22px;
  background-color: #cbcbcb;
  border: 1px solid #dcdcdc;
  color: #8a8a8a;
  white-space: nowrap;
}
.sort-label {
  display: block;
  margin-top: 4px;
  line-height: 18px;
  color: #222;
}
.pselect {
  display: flex;
  align-items: center;
  justify-content: space-between;
  width: 105px;
  height: 21px;
  margin: 2px 0 0 -1px;
  padding: 0 4px;
  background-color: #cbcbcb;
  border: 1px solid #d8d8d8;
  color: #808080;
}
.pselect svg {
  width: 9px;
  height: 6px;
}
.pbtn.update {
  margin-top: 10px;
}
.pane-icons {
  display: flex;
  gap: 8px;
  margin-top: 15px;
  padding-left: 4px;
}
.pane-icons svg {
  width: 19px;
  height: 19px;
}
.pi-pdf,
.pi-step {
  font-family: "Liberation Sans", sans-serif;
  font-size: 6px;
  font-weight: bold;
  fill: #fff;
  text-anchor: middle;
}
.pi-3d {
  font-family: "Liberation Sans", sans-serif;
  font-size: 6px;
  fill: #222;
  text-anchor: middle;
}
.thumb {
  width: 106px;
  height: 86px;
  flex: none;
  margin: 2px 0 0 27px;
  padding-top: 20px;
  display: flex;
  flex-direction: column;
  align-items: center;
  border: 2px solid #a9b0b5;
}
.thumb svg {
  width: 44px;
  height: 44px;
  margin-left: 6px;
}
.thumb figcaption {
  margin-top: 2px;
  line-height: 14px;
  color: #bdbdbd;
}
.pane-chev {
  width: 11px;
  height: 7px;
  margin: 11px 9px 0 auto;
}
.sheet-tabs {
  height: 16px;
  flex: none;
  display: flex;
  align-items: stretch;
  line-height: 14px;
  font-size: 11.5px;
  border-bottom: 1px solid #8f8f8f;
}
.tnav {
  width: 64px;
  display: flex;
  background-color: #c9c9c9;
}
.tnav i {
  flex: 1;
  font-style: normal;
  font-size: 8px;
  text-align: center;
  color: #9a9a9a;
  border-right: 1px solid #e4e4e4;
}
.stab {
  padding: 0 0 0 15px;
  width: 57px;
  background-color: #cbcbcb;
  border-right: 1px solid #8f8f8f;
}
.stab.active {
  width: 68px;
  padding-left: 7px;
  background-color: #f6f6f6;
  border-right: 0;
  font-weight: 700;
}
.stab.last {
  width: 108px;
  padding-left: 9px;
  border-left: 1px solid #8f8f8f;
}

/* right command bar */
.rightbar {
  position: relative;
  width: 34px;
  flex: none;
  display: flex;
  flex-direction: column;
  align-items: center;
  gap: 6px;
  background-color: #f6f6f6;
  padding: 1px 0 0 2px;
}
.rightbar .grip {
  width: 30px;
  margin: 2px 0 0;
}
.rightbar > svg,
.rb-active svg {
  width: 20px;
  height: 20px;
}
.rb-first {
  margin: 6px 0 2px;
}
.rb-active {
  width: 27px;
  height: 26px;
  padding: 2px 3px;
  background-color: #9a9a9a;
  border: 1px solid #6f6f6f;
  margin: -3px 0;
}
.rb-sep {
  width: 31px;
  height: 1px;
  margin: 0;
  border: 0;
  background-color: #9a9a9a;
}
.task-tabs {
  position: absolute;
  left: -26px;
  top: 52px;
  z-index: 3;
  width: 26px;
  display: flex;
  flex-direction: column;
  background-color: #d5d5d5;
  border: 1px solid #aaa;
  border-right: 0;
}
.tt {
  height: 24px;
  display: flex;
  align-items: center;
  justify-content: center;
  border-bottom: 1px solid #aaa;
}
.tt.first {
  background-color: #f6f6f6;
}
.tt svg {
  width: 20px;
  height: 20px;
}
.edge {
  width: 3px;
  flex: none;
  margin-top: -117px;
  background-color: #2f2a1a;
}
```
